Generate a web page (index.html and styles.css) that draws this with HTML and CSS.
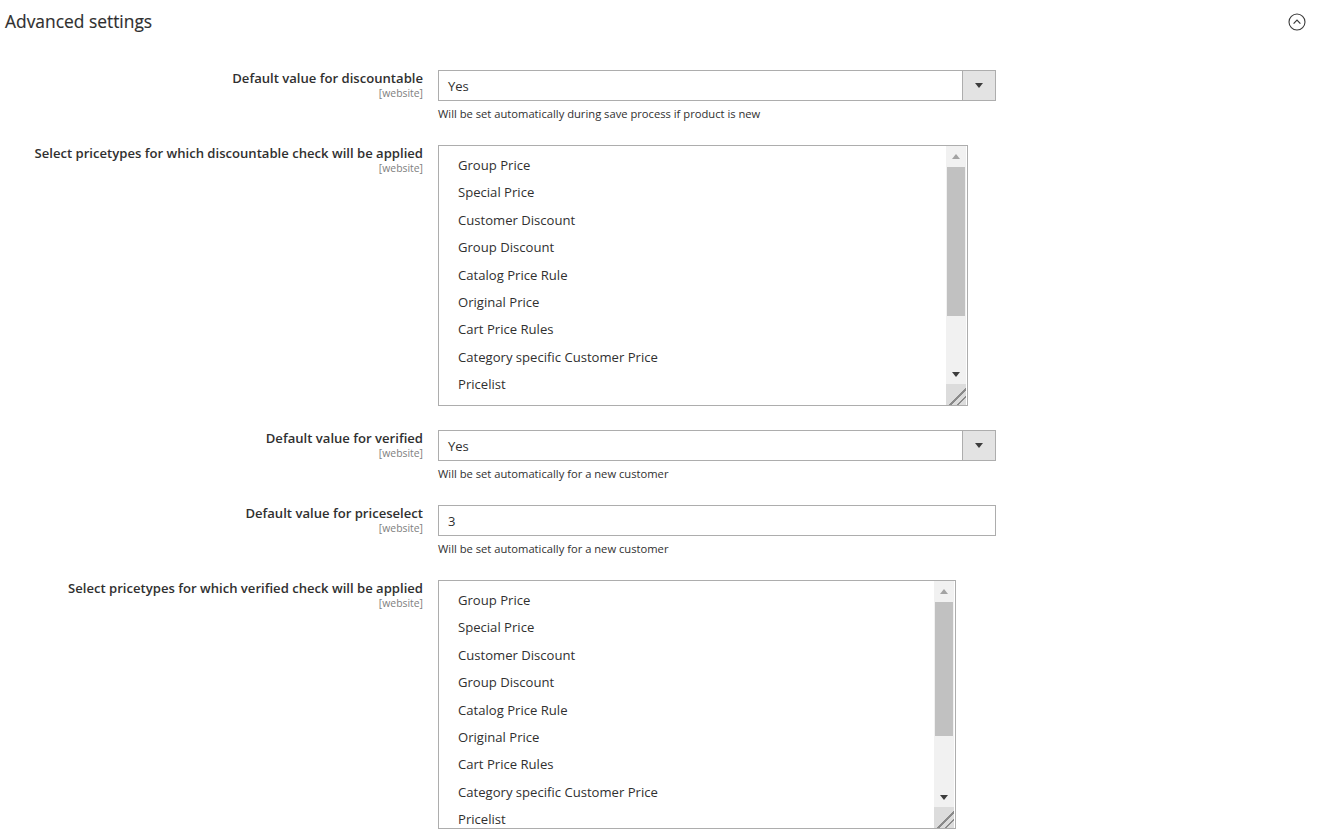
FILE: index.html
```html
<!DOCTYPE html>
<html lang="en">
<head>
<meta charset="utf-8">
<title>Advanced settings</title>
<link rel="stylesheet" href="styles.css">
</head>
<body>
<section class="section">
  <header class="section-head">
    <h2 class="section-title">Advanced settings</h2>
    <span class="collapse-icon" aria-hidden="true">
      <svg width="18" height="18" viewBox="0 0 18 18">
        <circle cx="9" cy="9" r="8" fill="none" stroke="#3a3a3a" stroke-width="1.1"/>
        <path d="M5.6 10.6 L9 7.2 L12.4 10.6" fill="none" stroke="#3a3a3a" stroke-width="1.2"/>
      </svg>
    </span>
  </header>

  <div class="form">
    <div class="row">
      <div class="label"><span class="label-text">Default value for discountable</span><span class="scope">[website]</span></div>
      <div class="control">
        <div class="select wide">
          <span class="select-value">Yes</span>
          <span class="select-btn"><span class="tri-down"></span></span>
        </div>
        <div class="note">Will be set automatically during save process if product is new</div>
      </div>
    </div>

    <div class="row">
      <div class="label"><span class="label-text">Select pricetypes for which discountable check will be applied</span><span class="scope">[website]</span></div>
      <div class="control">
        <div class="multi multi-a">
          <ul class="options">
            <li>Group Price</li>
            <li>Special Price</li>
            <li>Customer Discount</li>
            <li>Group Discount</li>
            <li>Catalog Price Rule</li>
            <li>Original Price</li>
            <li>Cart Price Rules</li>
            <li>Category specific Customer Price</li>
            <li>Pricelist</li>
          </ul>
          <div class="scrollbar">
            <span class="sb-btn"><span class="tri-up light"></span></span>
            <span class="sb-track"><span class="sb-thumb thumb-a"></span></span>
            <span class="sb-btn"><span class="tri-down"></span></span>
            <span class="sb-corner"></span>
          </div>
        </div>
      </div>
    </div>

    <div class="row">
      <div class="label"><span class="label-text">Default value for verified</span><span class="scope">[website]</span></div>
      <div class="control">
        <div class="select wide">
          <span class="select-value">Yes</span>
          <span class="select-btn"><span class="tri-down"></span></span>
        </div>
        <div class="note">Will be set automatically for a new customer</div>
      </div>
    </div>

    <div class="row">
      <div class="label"><span class="label-text">Default value for priceselect</span><span class="scope">[website]</span></div>
      <div class="control">
        <div class="input wide">3</div>
        <div class="note">Will be set automatically for a new customer</div>
      </div>
    </div>

    <div class="row">
      <div class="label"><span class="label-text">Select pricetypes for which verified check will be applied</span><span class="scope">[website]</span></div>
      <div class="control">
        <div class="multi multi-b">
          <ul class="options">
            <li>Group Price</li>
            <li>Special Price</li>
            <li>Customer Discount</li>
            <li>Group Discount</li>
            <li>Catalog Price Rule</li>
            <li>Original Price</li>
            <li>Cart Price Rules</li>
            <li>Category specific Customer Price</li>
            <li>Pricelist</li>
          </ul>
          <div class="scrollbar">
            <span class="sb-btn"><span class="tri-up light"></span></span>
            <span class="sb-track"><span class="sb-thumb thumb-b"></span></span>
            <span class="sb-btn"><span class="tri-down"></span></span>
            <span class="sb-corner"></span>
          </div>
        </div>
      </div>
    </div>
  </div>
</section>
</body>
</html>
```

FILE: styles.css
```css
html, body {
  margin: 0;
  padding: 0;
  background: #ffffff;
}

body {
  font-family: "Open Sans", "Liberation Sans", sans-serif;
  color: #303030;
  width: 1318px;
  height: 836px;
  overflow: hidden;
}

.section-head {
  display: flex;
  align-items: center;
  justify-content: space-between;
  height: 44px;
  padding: 0 12px 0 5px;
}

.section-title {
  margin: 0;
  font-size: 17.4px;
  font-weight: 400;
  color: #2f2f2f;
  line-height: 22px;
  position: relative;
  top: -1px;
  -webkit-text-stroke: 0.15px #2f2f2f;
}

.collapse-icon {
  display: flex;
  width: 18px;
  height: 18px;
}

.form {
  display: flex;
  flex-direction: column;
  gap: 24px;
  padding-top: 26px;
}

.row {
  display: grid;
  grid-template-columns: 423px 1fr;
  column-gap: 15px;
  align-items: start;
}

.label {
  display: flex;
  flex-direction: column;
  align-items: flex-end;
  padding-top: 0;
}

.label-text {
  font-size: 13.1px;
  font-weight: 600;
  line-height: 16px;
  color: #303030;
}

.scope {
  font-size: 10.4px;
  line-height: 12px;
  color: #808080;
  margin-top: 1px;
}

.control {
  display: flex;
  flex-direction: column;
  align-items: flex-start;
}

.wide {
  width: 558px;
}

.select {
  box-sizing: border-box;
  height: 31px;
  border: 1px solid #adadad;
  display: flex;
  align-items: stretch;
  background: #ffffff;
}

.select-value {
  flex: 1;
  display: flex;
  align-items: center;
  padding-left: 9px;
  font-size: 13px;
  color: #303030;
}

.select-btn {
  width: 32px;
  background: #e3e3e3;
  border-left: 1px solid #adadad;
  display: flex;
  align-items: center;
  justify-content: center;
}

.input {
  box-sizing: border-box;
  height: 31px;
  border: 1px solid #adadad;
  padding-left: 9px;
  display: flex;
  align-items: center;
  font-size: 13px;
  color: #303030;
}

.note {
  margin-top: 5px;
  font-size: 11.2px;
  line-height: 15px;
  color: #303030;
}

.tri-down {
  width: 0;
  height: 0;
  border-left: 4px solid transparent;
  border-right: 4px solid transparent;
  border-top: 5px solid #3d3d3d;
}

.tri-up {
  width: 0;
  height: 0;
  border-left: 4px solid transparent;
  border-right: 4px solid transparent;
  border-bottom: 5px solid #3d3d3d;
}

.tri-up.light {
  border-bottom-color: #a3a3a3;
}

.multi {
  box-sizing: border-box;
  border: 1px solid #adadad;
  display: flex;
  overflow: hidden;
  background: #ffffff;
}

.multi-a {
  width: 530px;
  height: 261px;
}

.multi-b {
  width: 518px;
  height: 249px;
}

.options {
  flex: 1;
  list-style: none;
  margin: 0;
  padding: 6px 0 0 19px;
  overflow: hidden;
}

.options li {
  height: 27.4px;
  line-height: 27.4px;
  font-size: 13.1px;
  color: #303030;
  white-space: nowrap;
}

.scrollbar {
  width: 20px;
  margin-right: 1px;
  display: flex;
  flex-direction: column;
  background: #f1f1f1;
}

.sb-btn {
  height: 20px;
  display: flex;
  align-items: center;
  justify-content: center;
  flex: none;
}

.sb-track {
  flex: 1;
  display: flex;
  flex-direction: column;
  padding-top: 1px;
}

.sb-thumb {
  background: #c1c1c1;
  margin: 0 1px;
}

.thumb-a {
  height: 149px;
}

.thumb-b {
  height: 134px;
}

.sb-corner {
  flex: none;
  height: 21px;
  background-color: #dcdcdc;
  background-image: linear-gradient(135deg, transparent 0 58%, #8a8a8a 58% 64%, transparent 64% 76%, #8a8a8a 76% 82%, transparent 82%);
}
```
